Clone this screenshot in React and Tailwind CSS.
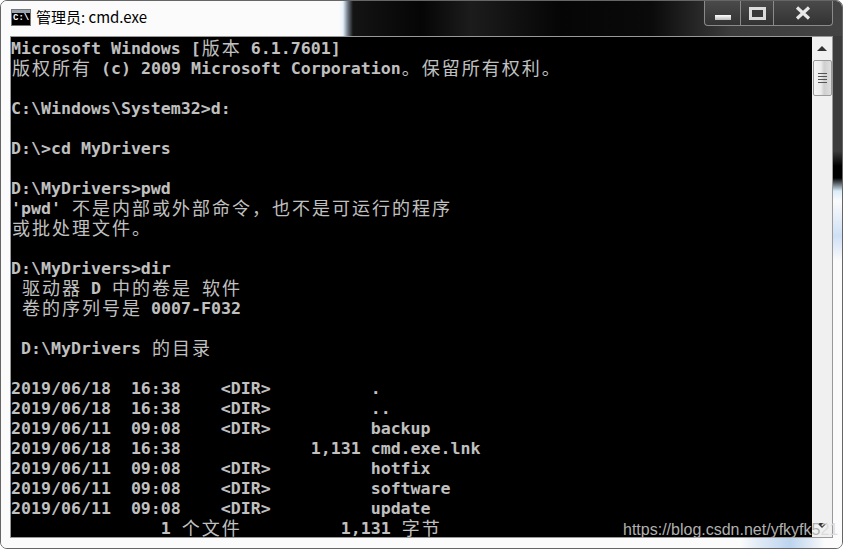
import { Fragment } from "react";

const lines = [
	"Microsoft Windows [版本 6.1.7601]",
	"版权所有 (c) 2009 Microsoft Corporation。保留所有权利。",
	"",
	"C:\\Windows\\System32>d:",
	"",
	"D:\\>cd MyDrivers",
	"",
	"D:\\MyDrivers>pwd",
	"'pwd' 不是内部或外部命令\uff0c也不是可运行的程序",
	"或批处理文件。",
	"",
	"D:\\MyDrivers>dir",
	" 驱动器 D 中的卷是 软件",
	" 卷的序列号是 0007-F032",
	"",
	" D:\\MyDrivers 的目录",
	"",
	"2019/06/18  16:38    <DIR>          .",
	"2019/06/18  16:38    <DIR>          ..",
	"2019/06/11  09:08    <DIR>          backup",
	"2019/06/18  16:38             1,131 cmd.exe.lnk",
	"2019/06/11  09:08    <DIR>          hotfix",
	"2019/06/11  09:08    <DIR>          software",
	"2019/06/11  09:08    <DIR>          update",
	"               1 个文件          1,131 字节",
];

// full width glyphs take two console cells
const ConsoleLine = ({ text }) => {
	const parts = text.split(/([\u3000-\u9fff\uff00-\uffef])/);
	return (
		<div className="h-5 whitespace-pre">
			{parts.map((part, i) =>
				i % 2 === 1 ? (
					<span key={i} className="inline-block h-5 w-5 text-center align-top font-['Noto_Sans_CJK_SC',sans-serif] text-[18px] font-normal leading-4">{part}</span>
				) : (
					<Fragment key={i}>{part}</Fragment>
				)
			)}
		</div>
	);
};

const CaptionButtons = () => (
	<div className="flex h-[25px] w-[129px] rounded-b-[4px] border border-t-0 border-[#8a8a8a] bg-[linear-gradient(180deg,#4a4a4a,#333)]">
		<div className="flex w-[36px] items-end justify-center border-r border-[#8a8a8a] pb-[5px]">
			<div className="h-[5px] w-[16px] bg-[linear-gradient(180deg,#fff,#bbb)]" />
		</div>
		<div className="flex w-[33px] items-center justify-center border-r border-[#8a8a8a]">
			<div className="h-[13px] w-[17px] border-[3px] border-[#dcdcdc] bg-[#3a3a3a]" />
		</div>
		<div className="flex flex-1 items-center justify-center">
			<svg width="16" height="14" viewBox="0 0 16 14">
				<path d="M2 1.5 L14 12.5 M14 1.5 L2 12.5" stroke="#e8e8e8" strokeWidth="3.2" fill="none" />
			</svg>
		</div>
	</div>
);

const Scrollbar = () => (
	<div className="flex w-[20px] flex-col items-center bg-[#f0f0f0]">
		<div className="flex h-[23px] items-center justify-center">
			<div className="h-0 w-0 border-x-[5px] border-b-[5px] border-x-transparent border-b-[#333]" />
		</div>
		<div className="flex h-[36px] w-[19px] flex-col items-center justify-center gap-[2px] rounded-[2px] border border-[#9a9a9a] bg-[linear-gradient(90deg,#f4f4f4_0,#ececec_40%,#cfcfcf_60%,#dedede_100%)]">
			<div className="h-px w-[9px] bg-[#555]" />
			<div className="h-px w-[9px] bg-[#555]" />
			<div className="h-px w-[9px] bg-[#555]" />
			<div className="h-px w-[9px] bg-[#555]" />
		</div>
		<div className="flex-1" />
		<div className="flex h-[23px] items-center justify-center">
			<div className="h-0 w-0 border-x-[5px] border-t-[5px] border-x-transparent border-t-[#333]" />
		</div>
	</div>
);

export default function App() {
	return (
		<div className="relative h-[549px] w-[843px] overflow-hidden bg-white">
			<div className="flex h-full flex-col overflow-hidden rounded-[7px] border border-[#666] bg-[#fbfbfb]">
				<div className="flex h-[35px] shrink-0 bg-[linear-gradient(90deg,#fbfbfb_0,#fbfbfb_338px,#e6f2fa_342px,#6a7480_347px,#141414_352px,#050505_420px,#1c1c1c_470px,#050505_560px,#0a0a0a_650px,#3c3c3c_730px,#444_843px)]">
					<div className="flex flex-1 items-center pb-[2px] pl-[10px]">
						<div className="flex h-[17px] w-[20px] flex-col border border-[#777] bg-black">
							<div className="h-[3px] bg-[#9aa4b0]" />
							<div className="pl-px font-['Liberation_Mono',monospace] text-[9px] font-bold leading-[11px] text-white">C:\.</div>
						</div>
						<span className="ml-[5px] font-['Noto_Sans_CJK_SC',sans-serif] text-[15px] text-black">管理员: cmd.exe</span>
					</div>
					<div className="mr-[9px]">
						<CaptionButtons />
					</div>
				</div>
				<div className="flex min-h-0 flex-1">
					<div className="w-[9px] bg-[#fbfbfb]" />
					<div className="flex min-h-0 flex-1 flex-col">
						<div className="flex min-h-0 flex-1 border border-[#999]">
							<div className="flex-1 overflow-hidden bg-black pt-[2px] font-['DejaVu_Sans_Mono',monospace] text-[16.6px] font-bold leading-5 text-[#c0c0c0]">
								{lines.map((line, i) => (
									<ConsoleLine key={i} text={line} />
								))}
							</div>
							<Scrollbar />
						</div>
						<div className="h-[10px] shrink-0 bg-[linear-gradient(90deg,#fbfbfb_730px,#dfe9f5_750px,#bcd4ef_780px,#dfe9f5_800px,#fbfbfb_815px)]" />
					</div>
					<div className="w-[9px] bg-[linear-gradient(180deg,#3c3c3c_0,#3c3c3c_115px,#000_130px,#000_142px,#d8ecf8_155px,#fbfbfb_165px,#cfe0f5_200px,#fbfbfb_225px)]" />
				</div>
			</div>
			<div className="absolute left-[623px] top-[520px] font-['Liberation_Sans',sans-serif] text-[16px] leading-5 text-[#b0b0b0]">
				https://blog.csdn.net/yfkyfk5<span className="text-[#dcdcdc]">21</span>
			</div>
		</div>
	);
}
